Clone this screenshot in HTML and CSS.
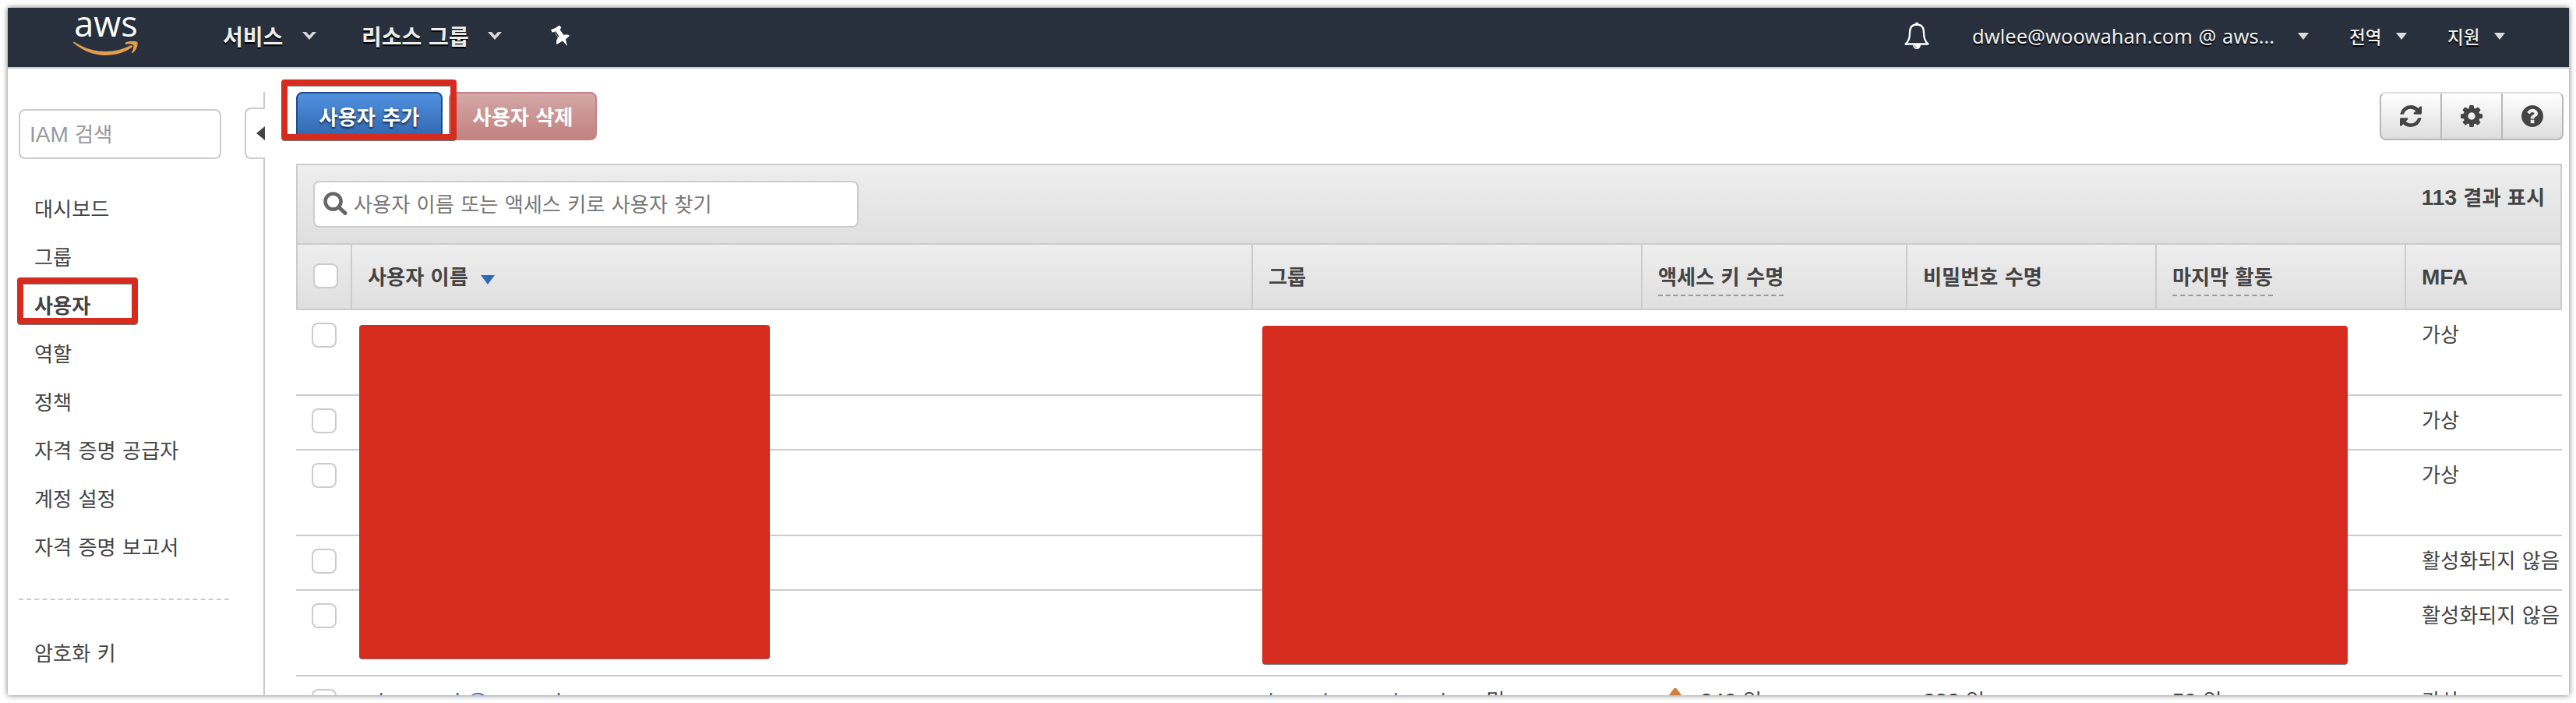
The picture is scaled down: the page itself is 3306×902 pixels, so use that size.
FILE: index.html
```html
<!DOCTYPE html>
<html lang="ko">
<head>
<meta charset="utf-8">
<title>IAM</title>
<link rel="stylesheet" href="styles.css">
</head>
<body>
<div class="window">
  <header class="nav">
    <div class="logo">
      <span class="logo-text">aws</span>
      <svg class="smile" width="84" height="20" viewBox="0 0 84 20"><path d="M1 1.5C16 11 28 14 42 14c12 0 22-3 31-7.500 2.500-1 4 .8 2 2.500C66 15.500 54 19 41 19 26 19 12 13 .5 3.300-.3 2.300.2 1.300 1 1.500z" fill="#e49c4f"/><path d="M67 2.600C71 .3 80 0 82 1.800c1.800 2.200-.5 10.500-5.500 14.200-.9.700-1.700.3-1.300-.7 1.200-3 3-8 2-9.600-1.200-1.500-6-1.300-9.200-1-1.200.1-2-.9-1-2.100z" fill="#e49c4f"/></svg>
    </div>
    <span class="menu services">서비스</span>
    <svg class="chev" width="18" height="12" viewBox="0 0 18 12"><path d="M0 1h5l4 4.500L13 1h5L9 11z" fill="#d8d8d8"/></svg>
    <span class="menu resources">리소스 그룹</span>
    <svg class="chev" width="18" height="12" viewBox="0 0 18 12"><path d="M0 1h5l4 4.500L13 1h5L9 11z" fill="#d8d8d8"/></svg>
    <svg class="pin" width="26" height="28" viewBox="0 0 26 28"><path d="M1 6C5 5 9 2.500 12 .5l2.500 3-2 2.500 5 7c3-1.500 6-.5 7.500 1l-5 4.500L22 27l-6-6.500L8.500 25c-1-3-.5-6 1.500-8.500L5.500 9 2.500 9.500z" fill="#fff"/><path d="M6.500 8.500l4.500 7" stroke="#27303c" stroke-width="1.400"/></svg>
    <svg class="bell" width="34" height="36" viewBox="0 0 34 36"><path d="M17 3.500C10 3.500 8 8 8 14c0 7-1.500 11.500-5.500 14.500h29C27.500 25.500 26 21 26 14c0-6-2-10.500-9-10.500z" fill="none" stroke="#fff" stroke-width="2.300" stroke-linejoin="round"/><circle cx="17" cy="2.500" r="2" fill="#fff"/><path d="M12 29h10c0 3.500-2 6-5 6s-5-2.500-5-6z" fill="#fff"/><path d="M14.500 30c0 2 1 3 2.500 3.500" fill="none" stroke="#555" stroke-width="1"/></svg>
    <span class="small account">dwlee@woowahan.com @ aws...</span>
    <svg class="caret" width="14" height="9" viewBox="0 0 14 9"><path d="M0 0h14L7 9z" fill="#dcdcdc"/></svg>
    <span class="small region">전역</span>
    <svg class="caret" width="14" height="9" viewBox="0 0 14 9"><path d="M0 0h14L7 9z" fill="#dcdcdc"/></svg>
    <span class="small support">지원</span>
    <svg class="caret" width="14" height="9" viewBox="0 0 14 9"><path d="M0 0h14L7 9z" fill="#dcdcdc"/></svg>
  </header>
  <div class="body">
    <aside class="side">
      <div class="iam-search"><span class="lat">IAM</span> 검색</div>
      <nav class="links">
        <a>대시보드</a><a>그룹</a><a class="on">사용자</a><a>역할</a><a>정책</a><a>자격 증명 공급자</a><a>계정 설정</a><a>자격 증명 보고서</a>
      </nav>
      <div class="rule"></div>
      <nav class="links keys"><a>암호화 키</a></nav>
    </aside>
    <div class="split">
      <div class="line short"></div>
      <div class="tab"><svg width="11" height="18" viewBox="0 0 11 18"><path d="M11 0v18L0 9z" fill="#444"/></svg></div>
      <div class="line"></div>
    </div>
    <main class="main">
      <div class="toolbar">
        <div class="btn add">사용자 추가</div>
        <div class="btn del">사용자 삭제</div>
        <div class="tools">
          <div class="tool"><svg width="28" height="28" viewBox="0 0 1536 1536"><path fill="#444" d="M1511 928q0 5-1 7-64 268-268 434.500T764 1536q-146 0-282.500-55T238 1324l-129 129q-19 19-45 19t-45-19-19-45V960q0-26 19-45t45-19h448q26 0 45 19t19 45-19 45l-137 137q71 66 161 102t187 36q134 0 250-65t186-179q11-17 53-117 8-23 30-23h192q13 0 22.500 9.500t9.500 22.500zm25-800v448q0 26-19 45t-45 19h-448q-26 0-45-19t-19-45 19-45l138-138Q969 256 768 256q-134 0-250 65T332 500q-11 17-53 117-8 23-30 23H50q-13 0-22.500-9.500T18 608v-7q65-268 270-434.500T768 0q146 0 284 55.500T1297 212l130-129q19-19 45-19t45 19 19 45z"/></svg></div>
          <div class="tool"><svg width="28" height="28" viewBox="0 0 1536 1536"><path fill="#444" d="M1024 768q0-106-75-181t-181-75-181 75-75 181 75 181 181 75 181-75 75-181zm512-109v222q0 12-8 23t-20 13l-185 28q-19 54-39 91 35 50 107 138 10 12 10 25t-9 23q-27 37-99 108t-94 71q-12 0-26-9l-138-108q-44 23-91 38-16 136-29 186-7 28-36 28H657q-14 0-24.500-8.500T621 1506l-28-184q-49-16-90-37l-141 107q-10 9-25 9-14 0-25-11-126-114-165-168-7-10-7-23 0-12 8-23 15-21 51-66.500t54-70.500q-27-50-41-99L29 913q-13-2-21-12.500T0 877V655q0-12 8-23t19-13l186-28q14-46 39-92-40-57-107-138-10-12-10-24 0-10 9-23 26-36 98.500-107.500T337 135q13 0 26 10l138 107q44-23 91-38 16-136 29-186 7-28 36-28h222q14 0 24.500 8.500T915 30l28 184q49 16 90 37l142-107q9-9 24-9 13 0 25 10 129 119 165 170 7 8 7 22 0 12-8 23-15 21-51 66.500t-54 70.500q26 50 41 98l183 28q13 2 21 12.500t8 23.500z"/></svg></div>
          <div class="tool"><svg width="28" height="28" viewBox="0 0 1536 1536"><path fill="#444" d="M896 1248v-192q0-14-9-23t-23-9H672q-14 0-23 9t-9 23v192q0 14 9 23t23 9h192q14 0 23-9t9-23zm256-672q0-88-55.500-163T958 297t-170-41q-243 0-371 213-15 24 8 42l132 100q7 6 19 6 16 0 25-12 53-68 86-92 34-24 86-24 48 0 85.500 26t37.500 59q0 38-20 61t-68 45q-63 28-115.500 86.500T640 892v36q0 14 9 23t23 9h192q14 0 23-9t9-23q0-19 21.500-49.500T972 829q32-18 49-28.500t46-35 44.500-48 28-60.500 12.500-81zm384 192q0 209-103 385.500T1153.500 1433 768 1536t-385.500-103T103 1153.500 0 768t103-385.500T382.500 103 768 0t385.500 103T1433 382.500 1536 768z"/></svg></div>
        </div>
      </div>
      <section class="table">
        <div class="filter">
          <div class="find"><svg width="31" height="30" viewBox="0 0 31 30"><circle cx="12.500" cy="12.500" r="10" fill="none" stroke="#666" stroke-width="4.600"/><path d="M20 20l8 7.500" stroke="#666" stroke-width="5" stroke-linecap="round"/></svg><span>사용자 이름 또는 액세스 키로 사용자 찾기</span></div>
          <div class="count"><span class="lat">113</span> 결과 표시</div>
        </div>
        <div class="row head">
          <div><i class="box"></i></div>
          <div>사용자 이름<svg class="sort" width="18" height="12" viewBox="0 0 18 12"><path d="M0 0h18L9 12z" fill="#2f6ab5"/></svg></div>
          <div>그룹</div>
          <div><span class="dash">액세스 키 수명</span></div>
          <div>비밀번호 수명</div>
          <div><span class="dash">마지막 활동</span></div>
          <div><span class="lat">MFA</span></div>
        </div>
        <div class="row tall"><div><i class="box"></i></div><div></div><div></div><div></div><div></div><div></div><div>가상</div></div>
        <div class="row"><div><i class="box"></i></div><div></div><div></div><div></div><div></div><div></div><div>가상</div></div>
        <div class="row tall"><div><i class="box"></i></div><div></div><div></div><div></div><div></div><div></div><div>가상</div></div>
        <div class="row"><div><i class="box"></i></div><div></div><div></div><div></div><div></div><div></div><div>활성화되지 않음</div></div>
        <div class="row tall"><div><i class="box"></i></div><div></div><div></div><div></div><div></div><div></div><div>활성화되지 않음</div></div>
        <div class="row"><div><i class="box"></i></div><div><span class="link lat">chawoonk@woowahan.com</span></div><div><span class="link lat">baroshawomkanekew</span> 및</div><div><svg class="warn" width="44" height="28" viewBox="0 0 44 28"><path d="M20.500 0h3L44 28H0z" fill="#cf8044"/></svg><span class="lat">249</span> 일</div><div><span class="lat">232</span> 일</div><div><span class="lat">59</span> 일</div><div>가상</div></div>
      </section>
    </main>
  </div>
</div>
<div class="mark mark-add"></div>
<div class="mark mark-users"></div>
<div class="cover cover-names"></div>
<div class="cover cover-details"></div>
</body>
</html>
```
FILE: styles.css
```css
* { box-sizing: border-box; }
body {
  margin: 0;
  width: 3306px;
  height: 902px;
  padding: 10px 9px 10px 10px;
  overflow: hidden;
  position: relative;
  background: #fff;
  color: #444;
  font: 26.2px/40px "Noto Sans CJK KR", sans-serif;
  word-spacing: 1px;
}
svg { display: block; flex: none; }
.lat { font-family: "Liberation Sans", sans-serif; font-size: 28px; line-height: 36px; }
.window {
  width: 3287px;
  height: 882px;
  overflow: hidden;
  background: #fff;
  box-shadow: 0 0 7px rgba(0, 0, 0, .55);
}
.nav {
  height: 78px;
  padding-bottom: 4px;
  display: flex;
  align-items: center;
  background: #27303c;
  border-bottom: 2px solid #ccc;
  color: #eee;
}
.logo { width: 84px; margin-left: 84px; height: 72px; display: flex; flex-direction: column; align-items: center; }
.logo-text { font: 500 45px/40px "Open Sans", sans-serif; color: #fff; height: 42px; }
.menu { font-weight: 700; font-size: 28px; text-shadow: 0 2px 1px #000; white-space: nowrap; }
.services { width: 102px; margin-left: 108px; }
.resources { width: 162px; margin-left: 58px; }
.pin { margin-left: 62px; }
.bell { margin-left: 1711px; }
.small { font-size: 22.500px; font-weight: 500; text-shadow: 0 2px 1px #000; white-space: nowrap; }
.account { width: 418px; margin-left: 54px; font-family: "Noto Sans", sans-serif; font-size: 25.500px; font-weight: 400; }
.region { width: 60px; margin-left: 52px; }
.support { width: 60px; margin-left: 52px; }

.body { display: flex; height: 804px; }
.side { width: 304px; padding: 52px 20px 0 14px; }
.iam-search {
  width: 260px;
  height: 64px;
  padding: 9px 12px;
  border: 2px solid #ccc;
  border-radius: 8px;
  color: #999;
}
.links { display: flex; flex-direction: column; padding: 43px 0 0 20px; }
.links a { height: 62px; line-height: 40px; white-space: nowrap; }
.links .on { font-weight: 700; }
.rule { width: 270px; border-top: 2px dashed #ccc; margin-top: 25px; }
.keys { padding-top: 47px; }
.split { width: 26px; display: flex; flex-direction: column; align-items: flex-end; padding-top: 30px; }
.line { width: 2px; flex: 1; background: #ccc; }
.short { flex: none; height: 20px; }
.tab {
  width: 26px;
  height: 66px;
  display: flex;
  align-items: center;
  justify-content: flex-end;
  border: 2px solid #ccc;
  border-right: 0;
  border-radius: 8px 0 0 8px;
}
.main { flex: 1; padding: 30px 7px 0 40px; }
.toolbar { display: flex; height: 62px; gap: 8px; }
.btn {
  height: 62px;
  line-height: 58px;
  text-align: center;
  color: #fff;
  font-weight: 700;
  border-radius: 8px;
}
.add { width: 188px; border: 2px solid #1f4e8c; background: linear-gradient(#5191e0, #2f65ac); text-shadow: 0 2px 3px rgba(0, 0, 0, .7); }
.del { width: 190px; border: 2px solid #c28583; background: linear-gradient(#d3a8a6, #c28280); }
.tools {
  display: flex;
  width: 236px;
  margin-left: auto;
  border: 2px solid #b8b8b8;
  border-top-color: #ddd;
  border-radius: 8px;
  background: linear-gradient(#fff, #ddd);
}
.tool { flex: 1; display: flex; align-items: center; justify-content: center; }
.tool + .tool { border-left: 2px solid #b8b8b8; }
.table { margin-top: 30px; width: 2908px; }
.filter {
  height: 104px;
  display: flex;
  justify-content: space-between;
  padding: 20px 20px 0 20px;
  border: 2px solid #ccc;
  background: linear-gradient(#eee, #dfdfdf);
}
.find {
  width: 700px;
  height: 60px;
  display: flex;
  align-items: center;
  gap: 8px;
  padding: 0 0 2px 11px;
  border: 2px solid #ccc;
  border-radius: 8px;
  background: #fff;
  color: #777;
}
.count { font-weight: 700; }
.row {
  display: grid;
  grid-template-columns: 70px 1156px 500px 340px 320px 320px 202px;
  height: 70px;
  border-bottom: 2px solid #ccc;
}
.tall { height: 110px; }
.row > div { padding: 10px 0 0 22px; white-space: nowrap; }
.row > div:first-child { padding: 16px 0 0 20px; }
.head { height: 84px; border-left: 2px solid #ccc; border-right: 2px solid #ccc; background: linear-gradient(#eee, #dfdfdf); font-weight: 700; }
.head { grid-template-columns: 70px 1156px 500px 340px 320px 320px 198px; }
.head > div { border-right: 2px solid #ccc; padding: 20px 0 0 20px; }
.head > div:first-child { padding-top: 24px; }
.head > div:last-child { border-right: 0; }
.box { display: block; width: 32px; height: 32px; border: 2px solid #ccc; border-radius: 8px; background: #fff; }
.sort { display: inline-block; margin-left: 16px; }
.dash { display: inline-block; height: 46px; border-bottom: 2px dashed #999; }
.link { color: #2f6ab5; }
.warn { display: inline-block; margin: 5px 10px 0 0; vertical-align: top; }

.mark { position: absolute; border: 8px solid #d62c20; border-radius: 4px; box-shadow: 0 1px 0 #777, inset 0 1px 0 #777; }
.mark-add { left: 361px; top: 102px; width: 225px; height: 78px; }
.mark-users { left: 22px; top: 356px; width: 155px; height: 60px; }
.cover { position: absolute; background: #d62c20; border-radius: 4px; box-shadow: 0 1px 0 #777; }
.cover-names { left: 461px; top: 417px; width: 527px; height: 428px; }
.cover-details { left: 1620px; top: 418px; width: 1393px; height: 434px; }
```
